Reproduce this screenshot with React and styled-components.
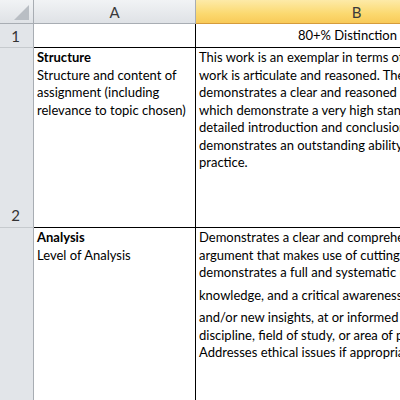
import React from 'react'
import styled, { createGlobalStyle } from 'styled-components'

const GlobalStyle = createGlobalStyle`
  html, body {
    margin: 0;
    padding: 0;
    background: #fff;
    overflow: hidden;
  }
`

const rows = [
  {
    num: '1',
    height: 24,
    a: null,
    b: { title: true, lines: ['80+% Distinction level (First Class Honours)'] },
  },
  {
    num: '2',
    height: 180,
    a: { heading: 'Structure', lines: ['Structure and content of', 'assignment (including', 'relevance to topic chosen)'] },
    b: {
      paras: [
        [
          'This work is an exemplar in terms of structure and content. The',
          'work is articulate and reasoned.  The assignment structure',
          'demonstrates a clear and reasoned sequence of arguments',
          'which demonstrate a very high standard of presentation, with a',
          'detailed introduction and conclusion. The assignment',
          'demonstrates an outstanding ability to relate theory to',
          'practice.',
        ],
      ],
    },
  },
  {
    num: '3',
    height: 200,
    a: { heading: 'Analysis', lines: ['Level of Analysis'] },
    b: {
      paras: [
        [
          'Demonstrates a clear and comprehensive, logical and coherent',
          'argument that makes use of cutting edge research and',
          'demonstrates a full and systematic understanding of',
        ],
        ['knowledge, and a critical awareness of current problems'],
        [
          'and/or new insights, at or informed by the forefront of the',
          'discipline, field of study, or area of professional practice.',
          'Addresses ethical issues if appropriate.',
        ],
      ],
    },
  },
]

const App = () => (
  <>
    <GlobalStyle />
    <Sheet>
      <Corner>
        <CornerMark />
      </Corner>
      <ColHeader>A</ColHeader>
      <ColHeader selected>B</ColHeader>
      {rows.map(row => (
        <React.Fragment key={row.num}>
          <RowHeader height={row.height} first={row.num === '1'}>
            {row.num}
          </RowHeader>
          <Cell height={row.height}>
            {row.a && (
              <>
                <Bold>{row.a.heading}</Bold>
                {row.a.lines.map(l => (
                  <Line key={l}>{l}</Line>
                ))}
              </>
            )}
          </Cell>
          <Cell height={row.height}>
            {row.b.title && <TitleLine>{row.b.lines[0]}</TitleLine>}
            {row.b.paras &&
              row.b.paras.map((p, i) => (
                <Para key={i} gap={i > 0}>
                  {p.map(l => (
                    <Line key={l}>{l}</Line>
                  ))}
                </Para>
              ))}
          </Cell>
        </React.Fragment>
      ))}
    </Sheet>
  </>
)

export default App

const Sheet = styled.div`
  display: grid;
  grid-template-columns: 34px 162px 322px;
  width: 518px;
  font-family: Lato, 'Open Sans', sans-serif;
  font-size: 13px;
  color: #000;
`

const Corner = styled.div`
  height: 24px;
  box-sizing: border-box;
  position: relative;
  background: linear-gradient(#f1f3f5, #dfe2e6);
  border-right: 1px solid #a8adb3;
  border-bottom: 1px solid #a8adb3;
`

const CornerMark = styled.div`
  position: absolute;
  right: 4px;
  bottom: 3px;
  width: 0;
  height: 0;
  border-left: 15px solid transparent;
  border-bottom: 15px solid #b9bec4;
`

const ColHeader = styled.div`
  height: 24px;
  box-sizing: border-box;
  display: flex;
  align-items: center;
  justify-content: center;
  font-size: 15px;
  color: #3a3a3a;
  background: ${p =>
    p.selected
      ? 'linear-gradient(#fdeaa8, #fbd96f 60%, #f8ca58)'
      : 'linear-gradient(#f1f3f5, #dfe2e6)'};
  border-bottom: 1px solid ${p => (p.selected ? '#d59c3c' : '#a8adb3')};
  border-right: 1px solid ${p => (p.selected ? '#e3b55a' : '#a8adb3')};
`

const RowHeader = styled.div`
  height: ${p => p.height}px;
  box-sizing: border-box;
  background: #e2e5e9;
  border-right: 1px solid #a8adb3;
  border-bottom: 1px solid #c6cace;
  display: flex;
  align-items: ${p => (p.first ? 'center' : 'flex-end')};
  justify-content: center;
  padding-bottom: ${p => (p.first ? '0' : '3px')};
  padding-right: 2px;
  font-size: 15px;
  color: #333;
`

const Cell = styled.div`
  height: ${p => p.height}px;
  box-sizing: border-box;
  border-right: 1px solid #000;
  border-bottom: 1px solid #000;
  padding: 1px 0 0 3px;
  overflow: hidden;
  line-height: 17.5px;
  white-space: nowrap;
`

const Bold = styled.div`
  font-weight: 700;
`

const Line = styled.div``

const Para = styled.div`
  margin-top: ${p => (p.gap ? '5px' : '0')};
`

const TitleLine = styled.div`
  padding: 2px 0 0 99px;
`
